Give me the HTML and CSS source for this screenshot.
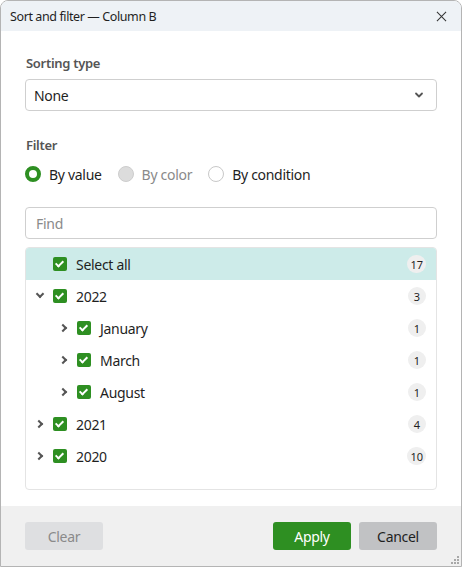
FILE: index.html
```html
<!DOCTYPE html>
<html lang="en">
<head>
    <meta charset="UTF-8">
    <meta name="viewport" content="width=device-width, initial-scale=1.0">
    <title>Sort and filter</title>
    <link rel="stylesheet" href="styles.css">
</head>
<body>
    <div class="window">
        <div class="titlebar">
            <span class="title">Sort and filter — Column B</span>
            <svg class="close" viewBox="0 0 12 12" fill="none" stroke="#333" stroke-width="1.1">
                <path d="M1 1l10 10M11 1L1 11" />
            </svg>
        </div>

        <div class="content">
            <div class="label">Sorting type</div>
            <div class="select">
                <span>None</span>
                <svg viewBox="0 0 10 6" fill="none" stroke="#555" stroke-width="1.8" stroke-linecap="round" stroke-linejoin="round">
                    <path d="M2 1.5l3 3 3-3" />
                </svg>
            </div>

            <div class="label filter-label">Filter</div>
            <div class="radios">
                <div class="radio checked"><span class="dot"></span>By value</div>
                <div class="radio disabled"><span class="dot"></span>By color</div>
                <div class="radio"><span class="dot"></span>By condition</div>
            </div>

            <div class="find">Find</div>

            <div class="list">
                <div class="row selected">
                    <span class="chev"></span>
                    <span class="check"></span>
                    <span class="name">Select all</span>
                    <span class="count">17</span>
                </div>
                <div class="row">
                    <span class="chev down"></span>
                    <span class="check"></span>
                    <span class="name">2022</span>
                    <span class="count">3</span>
                </div>
                <div class="row sub">
                    <span class="chev right"></span>
                    <span class="check"></span>
                    <span class="name">January</span>
                    <span class="count">1</span>
                </div>
                <div class="row sub">
                    <span class="chev right"></span>
                    <span class="check"></span>
                    <span class="name">March</span>
                    <span class="count">1</span>
                </div>
                <div class="row sub">
                    <span class="chev right"></span>
                    <span class="check"></span>
                    <span class="name">August</span>
                    <span class="count">1</span>
                </div>
                <div class="row">
                    <span class="chev right"></span>
                    <span class="check"></span>
                    <span class="name">2021</span>
                    <span class="count">4</span>
                </div>
                <div class="row">
                    <span class="chev right"></span>
                    <span class="check"></span>
                    <span class="name">2020</span>
                    <span class="count">10</span>
                </div>
            </div>
        </div>

        <div class="footer">
            <button class="btn clear">Clear</button>
            <div class="spacer"></div>
            <button class="btn apply">Apply</button>
            <button class="btn cancel">Cancel</button>
        </div>

        <svg class="grip" viewBox="0 0 10 10" fill="#a8a8a8">
            <rect x="7" y="1" width="2" height="2" />
            <rect x="4" y="4" width="2" height="2" />
            <rect x="7" y="4" width="2" height="2" />
            <rect x="1" y="7" width="2" height="2" />
            <rect x="4" y="7" width="2" height="2" />
            <rect x="7" y="7" width="2" height="2" />
        </svg>
    </div>
</body>
</html>
```

FILE: styles.css
```css
* {
    box-sizing: border-box;
    margin: 0;
    padding: 0;
}

body {
    font-family: 'Noto Sans', 'Open Sans', sans-serif;
    color: #1f1f1f;
    background: #fff;
    font-size: 14px;
    letter-spacing: -0.3px;
}

.window {
    position: relative;
    height: 100vh;
    display: flex;
    flex-direction: column;
    border: 1px solid #b4b4b4;
    border-radius: 8px 8px 0 0;
    overflow: hidden;
}

.titlebar {
    height: 30px;
    flex-shrink: 0;
    background: #eef2f6;
    display: flex;
    align-items: center;
    justify-content: space-between;
    padding: 0 10px 0 9px;
}

.title {
    font-size: 12.5px;
    letter-spacing: -0.4px;
}

.close {
    width: 11px;
    height: 11px;
    margin-right: 4px;
}

.content {
    flex: 1;
    display: flex;
    flex-direction: column;
    padding: 23px 24px 16px;
    min-height: 0;
}

.label {
    font-size: 13px;
    font-weight: 600;
    color: #555;
    height: 18px;
    line-height: 18px;
    padding-left: 1px;
    margin-bottom: 7px;
}

.select {
    height: 32px;
    border: 1px solid #cfcfcf;
    border-radius: 4px;
    display: flex;
    align-items: center;
    justify-content: space-between;
    padding: 0 12px 0 8px;
}

.select svg {
    width: 10px;
    height: 6px;
}

.filter-label {
    margin-top: 25px;
    margin-bottom: 10px;
}

.radios {
    display: flex;
    align-items: center;
    height: 20px;
}

.radio {
    display: flex;
    align-items: center;
    gap: 8px;
    margin-right: 16px;
}

.dot {
    width: 16px;
    height: 16px;
    border-radius: 50%;
    border: 1px solid #c8c8c8;
    background: #fff;
}

.radio.checked .dot {
    border: 4px solid #2e8f22;
}

.radio.disabled {
    color: #8a8a8a;
}

.radio.disabled .dot {
    background: #dcdcdc;
    border-color: #cdcdcd;
}

.find {
    margin-top: 23px;
    height: 32px;
    border: 1px solid #cfcfcf;
    border-radius: 4px;
    color: #8a8a8a;
    display: flex;
    align-items: center;
    padding-left: 10px;
}

.list {
    margin-top: 8px;
    flex: 1;
    border: 1px solid #e4e4e4;
    border-radius: 4px;
    overflow: hidden;
}

.row {
    height: 32px;
    display: flex;
    align-items: center;
    padding: 0 10px 0 8px;
}

.row.selected {
    background: #cdebe9;
}

.row.sub {
    padding-left: 32px;
}

.chev {
    width: 12px;
    height: 12px;
    margin-right: 7px;
    position: relative;
}

.chev.down::before,
.chev.right::before {
    content: "";
    position: absolute;
    width: 4px;
    height: 4px;
    border-right: 2px solid #555;
    border-bottom: 2px solid #555;
    left: 3px;
    top: 2px;
}

.chev.down::before {
    transform: rotate(45deg);
    top: 1px;
}

.chev.right::before {
    transform: rotate(-45deg);
    left: 2px;
    top: 3px;
}

.check {
    width: 14px;
    height: 14px;
    border-radius: 2px;
    background: #2e8f22;
    position: relative;
    margin-right: 9px;
}

.check::after {
    content: "";
    position: absolute;
    left: 4px;
    top: 2px;
    width: 3px;
    height: 6px;
    border-right: 2px solid #fff;
    border-bottom: 2px solid #fff;
    transform: rotate(45deg);
}

.name {
    flex: 1;
}

.count {
    min-width: 18px;
    height: 18px;
    border-radius: 9px;
    background: #efefef;
    font-size: 11px;
    letter-spacing: 0;
    display: flex;
    align-items: center;
    justify-content: center;
    padding: 0 3px;
}

.footer {
    height: 60px;
    flex-shrink: 0;
    background: #f0f0f0;
    display: flex;
    align-items: center;
    gap: 8px;
    padding: 0 24px;
}

.spacer {
    flex: 1;
}

.btn {
    width: 78px;
    height: 28px;
    border: none;
    border-radius: 3px;
    font-family: inherit;
    font-size: 14px;
    letter-spacing: -0.3px;
}

.btn.clear {
    background: #dedfe1;
    color: #8a8a8a;
}

.btn.apply {
    background: #2e8f22;
    color: #fff;
}

.btn.cancel {
    background: #c1c2c4;
    color: #1f1f1f;
}

.grip {
    position: absolute;
    right: 1px;
    bottom: 1px;
    width: 10px;
    height: 10px;
}
```
